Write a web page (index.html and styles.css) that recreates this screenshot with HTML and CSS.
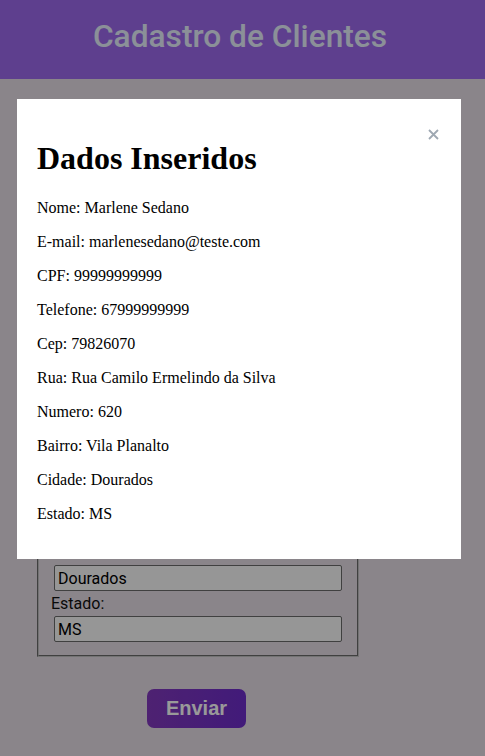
FILE: index.html
```html
<!DOCTYPE html>
<html lang="pt-BR">
<head>
<meta charset="utf-8">
<title>Cadastro de Clientes</title>
<link rel="stylesheet" href="styles.css">
</head>
<body>
<header class="topbar">
  <h1 class="topbar-title">Cadastro de Clientes</h1>
</header>
<main class="page">
  <form class="client-form">
    <fieldset class="fields">
      <label class="field-label" for="nome">Nome:</label>
      <input class="field-input" id="nome" type="text" value="Marlene Sedano">
      <label class="field-label" for="email">E-mail:</label>
      <input class="field-input" id="email" type="text" value="marlenesedano@teste.com">
      <label class="field-label" for="cpf">CPF:</label>
      <input class="field-input" id="cpf" type="text" value="99999999999">
      <label class="field-label" for="tel">Telefone:</label>
      <input class="field-input" id="tel" type="text" value="67999999999">
      <label class="field-label" for="cep">Cep:</label>
      <input class="field-input" id="cep" type="text" value="79826070">
      <label class="field-label" for="rua">Rua:</label>
      <input class="field-input" id="rua" type="text" value="Rua Camilo Ermelindo da Silva">
      <label class="field-label" for="numero">Numero:</label>
      <input class="field-input" id="numero" type="text" value="620">
      <label class="field-label" for="bairro">Bairro:</label>
      <input class="field-input" id="bairro" type="text" value="Vila Planalto">
      <label class="field-label" for="cidade">Cidade:</label>
      <input class="field-input" id="cidade" type="text" value="Dourados">
      <label class="field-label" for="estado">Estado:</label>
      <input class="field-input" id="estado" type="text" value="MS">
    </fieldset>
    <div class="actions">
      <button class="submit-btn" type="button">Enviar</button>
    </div>
  </form>
</main>
<div class="overlay">
  <div class="modal">
    <button class="modal-close" type="button" aria-label="Fechar">
      <svg width="11" height="11" viewBox="0 0 11 11"><path d="M1 1L10 10M10 1L1 10" stroke="currentColor" stroke-width="1.8" fill="none"/></svg>
    </button>
    <h2 class="modal-title">Dados Inseridos</h2>
    <p class="modal-line">Nome: Marlene Sedano</p>
    <p class="modal-line">E-mail: marlenesedano@teste.com</p>
    <p class="modal-line">CPF: 99999999999</p>
    <p class="modal-line">Telefone: 67999999999</p>
    <p class="modal-line">Cep: 79826070</p>
    <p class="modal-line">Rua: Rua Camilo Ermelindo da Silva</p>
    <p class="modal-line">Numero: 620</p>
    <p class="modal-line">Bairro: Vila Planalto</p>
    <p class="modal-line">Cidade: Dourados</p>
    <p class="modal-line">Estado: MS</p>
  </div>
</div>
</body>
</html>
```
FILE: styles.css
```css
html, body {
  margin: 0;
  padding: 0;
}
body {
  background: #e6dee6;
  font-family: Roboto, "Liberation Sans", sans-serif;
  color: #111;
  height: 756px;
  overflow: hidden;
}
.topbar {
  height: 79px;
  box-sizing: border-box;
  padding-top: 18px;
  padding-right: 5px;
  background: #9d69ed;
  text-align: center;
}
.topbar-title {
  margin: 0;
  font-family: Roboto, sans-serif;
  font-size: 31.7px;
  font-weight: 500;
  line-height: 38px;
  color: #e8f0fe;
}
.page {
  padding-top: 48px;
}
.client-form {
  width: 322px;
  margin-left: 37px;
}
.fields {
  margin: 0;
  padding: 6px 12px 10px;
  border: 2px groove #c0c0c0;
}
.field-label {
  display: block;
  font-size: 16px;
  line-height: 19px;
  color: #111;
}
.field-input {
  display: block;
  box-sizing: border-box;
  width: calc(100% - 6px);
  height: 26px;
  margin: 3px;
  padding: 1px 3px;
  border: 1px solid #6b6b6b;
  border-radius: 2px;
  background: #fafafa;
  font-family: Roboto, sans-serif;
  font-size: 16px;
  color: #000;
}
.actions {
  display: flex;
  justify-content: center;
  padding-top: 32px;
  padding-right: 3px;
}
.submit-btn {
  width: 99px;
  height: 39px;
  border: none;
  border-radius: 7px;
  background: linear-gradient(90deg, #8239be, #6e2dcb);
  color: #fff;
  font-family: "Liberation Sans", Arial, sans-serif;
  font-size: 20px;
  font-weight: bold;
  padding: 0;
}
.overlay {
  position: fixed;
  inset: 0;
  background: rgba(0, 0, 0, 0.4);
  padding-top: 99px;
}
.modal {
  position: relative;
  box-sizing: border-box;
  width: 444px;
  margin-left: 17px;
  padding: 20px 20px 20px;
  background: #fff;
  font-family: "Liberation Serif", serif;
  color: #000;
}
.modal-close {
  position: absolute;
  top: 30px;
  right: 22px;
  width: 11px;
  height: 11px;
  padding: 0;
  border: none;
  background: none;
  color: #9ea8b2;
  display: flex;
}
.modal-title {
  margin: 21.44px 0;
  font-size: 32px;
  font-weight: bold;
  line-height: normal;
}
.modal-line {
  margin: 16px 0;
  font-size: 16px;
  line-height: normal;
}
```
